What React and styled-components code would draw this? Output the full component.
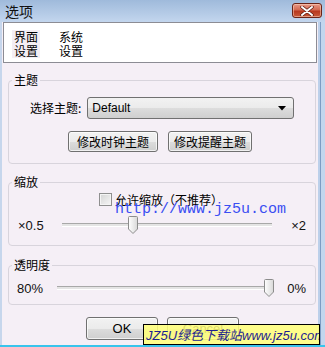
import React from "react";
import styled, { createGlobalStyle } from "styled-components";

const GlobalStyle = createGlobalStyle`
  html, body { margin: 0; padding: 0; background: #b8cde8; }
  body { font-family: "Noto Sans CJK SC", "Liberation Sans", sans-serif; font-size: 12px; color: #000; }
`;

const cjk = `"Noto Sans CJK SC", sans-serif`;
const latin = `"Liberation Sans", "DejaVu Sans", sans-serif`;

const Slider = ({ min, max, value }) => (
  <SliderRow>
    <EndLabel $w={min.w}>{min.text}</EndLabel>
    <Track>
      <Thumb style={{ left: `calc(${value * 100}% - ${value * 10}px)` }}>
        <svg width="10" height="18" viewBox="0 0 10 18">
          <defs>
            <linearGradient id="tg" x1="0" x2="1" y1="0" y2="0">
              <stop offset="0" stopColor="#ffffff" />
              <stop offset="1" stopColor="#d8d8d8" />
            </linearGradient>
          </defs>
          <path d="M0.5 1.5 Q0.5 0.5 1.5 0.5 H8.5 Q9.5 0.5 9.5 1.5 V13 L5 17.5 L0.5 13 Z" fill="url(#tg)" stroke="#8c8c8c" />
        </svg>
      </Thumb>
    </Track>
    <EndLabel $w={max.w} $right>{max.text}</EndLabel>
  </SliderRow>
);

const App = () => {
  return (
    <>
      <GlobalStyle />
      <Window>
        <TitleBar>
          <Title>选项</Title>
          <CloseButton>
            <svg width="14" height="10" viewBox="0 0 14 10">
              <path d="M2 1 L12 9 M12 1 L2 9" stroke="#5a1a10" strokeWidth="3.4" strokeLinecap="round" />
              <path d="M2 1 L12 9 M12 1 L2 9" stroke="#ffffff" strokeWidth="2" strokeLinecap="round" />
            </svg>
          </CloseButton>
        </TitleBar>
        <Client>
          <TabStrip>
            <Tab $active>界面<br />设置</Tab>
            <Tab>系统<br />设置</Tab>
          </TabStrip>

          <Group $mt={10}>
            <Legend>主题</Legend>
            <GroupBody $pt={10} $pb={11}>
              <ThemeRow>
                <FieldLabel>选择主题:</FieldLabel>
                <Combo>
                  <span>Default</span>
                  <svg width="8" height="5" viewBox="0 0 8 5">
                    <path d="M0 0 H8 L4 4.5 Z" fill="#000" />
                  </svg>
                </Combo>
              </ThemeRow>
              <ButtonRow>
                <Button $w={90}>修改时钟主题</Button>
                <Button $w={84}>修改提醒主题</Button>
              </ButtonRow>
            </GroupBody>
          </Group>

          <Group $mt={11}>
            <Legend>缩放</Legend>
            <GroupBody $pt={3} $pb={11}>
              <CheckRow>
                <CheckBox />
                <span>允许缩放（不推荐）</span>
              </CheckRow>
              <Slider min={{ text: "×0.5", w: 44 }} max={{ text: "×2", w: 34 }} value={0.33} />
              <UrlMark>http://www.jz5u.com</UrlMark>
            </GroupBody>
          </Group>

          <Group $mt={12}>
            <Legend>透明度</Legend>
            <GroupBody $pt={7} $pb={7} $pl={8}>
              <Slider min={{ text: "80%", w: 40 }} max={{ text: "0%", w: 32 }} value={1} />
            </GroupBody>
          </Group>

          <Footer>
            <PushButton>OK</PushButton>
            <PushButton>Cancel</PushButton>
          </Footer>
          <Badge>JZ5U绿色下载站www.jz5u.com</Badge>
        </Client>
      </Window>
    </>
  );
};

export default App;

const Window = styled.div`
  width: 325px;
  height: 347px;
  box-sizing: border-box;
  display: flex;
  flex-direction: column;
  background: linear-gradient(to right, #c6d6ec 0, #c6d6ec 318px, #bcd0ea 318px, #bcd0ea 320px, #7d9cc4 320px, #7d9cc4 321px, #c2d6ee 321px);
  border-bottom: 2px solid #38c4ec;
  overflow: hidden;
`;

const TitleBar = styled.div`
  height: 22px;
  flex: none;
  display: flex;
  align-items: flex-start;
  justify-content: space-between;
  background: linear-gradient(#9fbadb, #c3d6ee);
`;

const Title = styled.div`
  font-family: ${cjk};
  font-size: 14px;
  line-height: 16px;
  padding: 3px 0 0 5px;
  color: #111;
`;

const CloseButton = styled.div`
  width: 28px;
  height: 13px;
  margin: 3px 3px 0 0;
  border: 1px solid #6b2418;
  border-radius: 3px;
  display: flex;
  align-items: center;
  justify-content: center;
  background: linear-gradient(#e89a88 0%, #d46a52 45%, #b8381e 55%, #c85a3a 100%);
  box-shadow: inset 0 0 0 1px rgba(255, 220, 200, 0.5);
`;

const Client = styled.div`
  position: relative;
  flex: 1;
  margin: 0 7px 0 2px;
  background: #f5eff6;
  display: flex;
  flex-direction: column;
`;

const TabStrip = styled.div`
  width: 314px;
  height: 41px;
  box-sizing: border-box;
  margin-left: 1px;
  border: 1px solid #8c8c94;
  background: #fff;
  display: flex;
  gap: 17px;
  padding: 7px 0 0 8px;
`;

const Tab = styled.div`
  font-family: ${cjk};
  font-size: 12px;
  line-height: 14px;
  padding: 0 2px;
  height: 28px;
  background: ${(p) => (p.$active ? "#f4eef4" : "transparent")};
`;

const Group = styled.fieldset`
  margin: ${(p) => p.$mt}px 0 0 6px;
  width: 308px;
  box-sizing: border-box;
  padding: 0;
  border: 1px solid #d8d4dc;
  border-radius: 4px;
  min-inline-size: 0;
`;

const Legend = styled.legend`
  font-family: ${cjk};
  font-size: 12px;
  line-height: 14px;
  padding: 0 2px;
  margin-left: 3px;
`;

const GroupBody = styled.div`
  position: relative;
  padding: ${(p) => p.$pt}px 0 ${(p) => p.$pb}px ${(p) => p.$pl ?? 9}px;
  display: flex;
  flex-direction: column;
`;

const ThemeRow = styled.div`
  display: flex;
  align-items: center;
  height: 22px;
  padding-left: 12px;
  gap: 6px;
`;

const FieldLabel = styled.span`
  font-family: ${cjk};
  font-size: 12px;
  line-height: 14px;
`;

const Combo = styled.div`
  width: 207px;
  height: 22px;
  box-sizing: border-box;
  border: 1px solid #707070;
  border-radius: 3px;
  background: linear-gradient(#f2f2f2 0%, #ebebeb 50%, #dddddd 50%, #cfcfcf 100%);
  display: flex;
  align-items: center;
  justify-content: space-between;
  padding: 0 7px 0 4px;
  font-family: ${latin};
  font-size: 12px;
  color: #000;
`;

const ButtonRow = styled.div`
  display: flex;
  gap: 10px;
  margin-top: 12px;
  padding-left: 50px;
`;

const Button = styled.div`
  width: ${(p) => p.$w}px;
  height: 21px;
  box-sizing: border-box;
  border: 1px solid #707070;
  border-radius: 3px;
  background: linear-gradient(#f2f2f2 0%, #ebebeb 50%, #dddddd 50%, #cfcfcf 100%);
  box-shadow: inset 0 0 0 1px rgba(255, 255, 255, 0.7);
  display: flex;
  align-items: center;
  justify-content: center;
  font-family: ${cjk};
  font-size: 12px;
  line-height: 14px;
`;

const CheckRow = styled.div`
  display: flex;
  align-items: center;
  gap: 3px;
  height: 14px;
  padding-left: 81px;
  font-family: ${cjk};
  font-size: 12px;
`;

const CheckBox = styled.span`
  width: 13px;
  height: 13px;
  box-sizing: border-box;
  border: 1px solid #8f8f8f;
  background: linear-gradient(135deg, #d4d4d4, #f6f6f6);
  box-shadow: inset 0 0 0 1px #f4f4f4;
  flex: none;
`;

const SliderRow = styled.div`
  display: flex;
  align-items: center;
  height: 18px;
  margin-top: 10px;
  padding-right: 9px;
  &:first-child { margin-top: 0; }
`;

const EndLabel = styled.span`
  width: ${(p) => p.$w}px;
  flex: none;
  text-align: ${(p) => (p.$right ? "right" : "left")};
  font-family: ${latin};
  font-size: 13px;
  color: #111;
`;

const Track = styled.div`
  position: relative;
  flex: 1;
  height: 2px;
  border-top: 1px solid #a8a8a8;
  border-bottom: 1px solid #ffffff;
  background: #e4e4e4;
`;

const Thumb = styled.div`
  position: absolute;
  top: -8px;
  width: 10px;
  height: 18px;
  display: flex;
`;

const UrlMark = styled.div`
  position: absolute;
  left: 106px;
  top: 14px;
  font-family: "Liberation Mono", monospace;
  font-size: 15px;
  line-height: 14px;
  color: #3a4ef2;
  white-space: nowrap;
  pointer-events: none;
`;

const Footer = styled.div`
  display: flex;
  gap: 9px;
  margin-top: 12px;
  padding-left: 84px;
`;

const PushButton = styled.div`
  width: 72px;
  height: 23px;
  box-sizing: border-box;
  border: 1px solid #707070;
  border-radius: 3px;
  background: linear-gradient(#f2f2f2 0%, #ebebeb 50%, #dddddd 50%, #cfcfcf 100%);
  box-shadow: inset 0 0 0 1px rgba(255, 255, 255, 0.7);
  display: flex;
  align-items: center;
  justify-content: center;
  font-family: ${latin};
  font-size: 13px;
  color: #000;
`;

const Badge = styled.div`
  position: absolute;
  right: -2px;
  bottom: 0;
  width: 177px;
  height: 21px;
  box-sizing: border-box;
  border: 1px solid #000;
  background: rgba(255, 255, 120, 0.86);
  display: flex;
  align-items: center;
  padding-left: 2px;
  font-family: ${latin}, ${cjk};
  font-style: italic;
  font-size: 13px;
  color: #1e1e90;
  white-space: nowrap;
  overflow: hidden;
`;
